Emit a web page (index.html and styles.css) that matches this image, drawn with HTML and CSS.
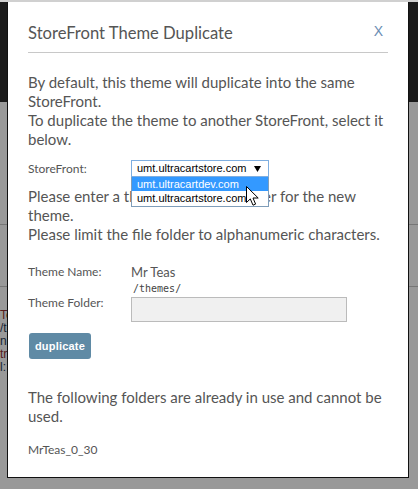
FILE: index.html
```html
<!DOCTYPE html>
<html lang="en">
<head>
<meta charset="utf-8">
<title>StoreFront Themes</title>
<link rel="stylesheet" href="styles.css">
</head>
<body>
  <div class="page">
    <header class="page-head"></header>
    <section class="page-toolbar"></section>
    <section class="page-filter"></section>
    <ul class="page-list">
      <li class="tone-red">Teas</li>
      <li>/themes</li>
      <li>n: 0</li>
      <li class="tone-red">tr</li>
      <li>l: 1</li>
    </ul>
  </div>

  <div class="backdrop"></div>

  <div class="modal" role="dialog" aria-labelledby="dup-title">
    <div class="modal-head">
      <h2 class="modal-title" id="dup-title">StoreFront Theme Duplicate</h2>
      <button class="modal-close" type="button">X</button>
    </div>
    <div class="modal-body">
      <p class="lead">By default, this theme will duplicate into the same StoreFront.<br>To duplicate the theme to another StoreFront, select it below.</p>

      <div class="sf-row">
        <span class="field-label">StoreFront:</span>
        <div class="select">
          <div class="select-box">
            <span>umt.ultracartstore.com</span>
            <svg class="caret" width="7" height="6" viewBox="0 0 7 6"><path d="M0 0H7L3.5 6Z" fill="#000"/></svg>
          </div>
          <ul class="select-list">
            <li class="is-active">umt.ultracartdev.com</li>
            <li>umt.ultracartstore.com</li>
          </ul>
          <svg class="pointer" width="13" height="20" viewBox="0 0 13 20">
            <path d="M0.5 0.5V16.5L4.3 12.9L7 19.2L9.6 18.1L7 12H12.2Z" fill="#fff" stroke="#000" stroke-width="1" stroke-linejoin="round"/>
          </svg>
        </div>
      </div>

      <p class="lead lead-gap">Please enter a theme name and folder for the new theme.<br>Please limit the file folder to alphanumeric characters.</p>

      <div class="form-grid">
        <span class="field-label">Theme Name:</span>
        <span class="field-value">Mr Teas</span>
        <span class="field-label">Theme Folder:</span>
        <div class="folder">
          <code class="folder-prefix">/themes/</code>
          <input class="folder-input" type="text">
        </div>
      </div>

      <button class="btn" type="button">duplicate</button>

      <p class="lead lead-used">The following folders are already in use and cannot be used.</p>
      <div class="used-folder">MrTeas_0_30</div>
    </div>
  </div>
</body>
</html>
```

FILE: styles.css
```css
* {
  box-sizing: border-box;
}

html,
body {
  margin: 0;
  height: 100%;
}

body {
  font-family: Lato, "Noto Sans", sans-serif;
  background: #fff;
  overflow: hidden;
}

/* ---- page behind the dialog ---- */
.page {
  border-top: 2px solid #d0d0d0;
}

.page-head {
  height: 100px;
  background: #2d2d2d;
}

.page-toolbar {
  height: 123px;
  border-bottom: 1px solid #c6c6c6;
}

.page-filter {
  height: 62px;
  border-bottom: 1px solid #c6c6c6;
}

.page-list {
  list-style: none;
  margin: 22px 0 0;
  padding: 0;
  font: 12px/13px "Liberation Sans", Arial, sans-serif;
  color: #2b3a55;
}

.page-list .tone-red {
  color: #8c2f2f;
}

.backdrop {
  position: fixed;
  top: 2px;
  left: 0;
  right: 0;
  bottom: 0;
  background: rgba(0, 0, 0, 0.4);
}

/* ---- dialog ---- */
.modal {
  position: fixed;
  top: 2px;
  left: 7px;
  width: 402px;
  background: #fff;
  border: 1px solid #111;
  border-top: 0;
  padding: 0 20px 20px;
  color: #555;
}

.modal-head {
  display: flex;
  justify-content: space-between;
  align-items: flex-start;
  padding: 21px 0 9px;
  border-bottom: 1px solid #c8c8c8;
}

.modal-title {
  margin: 0;
  font-size: 16.6px;
  line-height: 20px;
  font-weight: 400;
  color: #555;
}

.modal-close {
  margin: 0 5px 0 0;
  padding: 0;
  border: 0;
  background: none;
  font: 14px/16px "Liberation Sans", Arial, sans-serif;
  color: #6a8db3;
  cursor: pointer;
}

.modal-body {
  padding-top: 20px;
}

.lead {
  margin: 0;
  font-size: 15px;
  line-height: 19px;
}

.lead-gap {
  margin-top: 10px;
}

.lead-used {
  margin-top: 29px;
}

.field-label {
  font-size: 12px;
  line-height: 16px;
}

/* storefront picker */
.sf-row {
  display: flex;
  align-items: center;
  margin-top: 11px;
}

.sf-row .field-label {
  width: 103px;
}

.select {
  position: relative;
}

.select-box {
  width: 138px;
  height: 17px;
  display: flex;
  align-items: center;
  justify-content: space-between;
  padding: 0 7px 0 5px;
  border: 1px solid #7eaee0;
  font: 11px/15px "Liberation Sans", Arial, sans-serif;
  color: #000;
}

.select-list {
  position: absolute;
  top: 100%;
  left: 0;
  width: 138px;
  margin: 0;
  padding: 0 0 1px;
  list-style: none;
  background: #fff;
  border: 1px solid #7f9db9;
  border-top: 0;
  font: 11px/14px "Liberation Sans", Arial, sans-serif;
  color: #000;
}

.select-list li {
  padding-left: 5px;
}

.select-list .is-active {
  background: #3399ff;
  color: #fff;
}

.pointer {
  position: absolute;
  left: 115px;
  top: 26px;
}

/* theme fields */
.form-grid {
  display: grid;
  grid-template-columns: 103px 1fr;
  row-gap: 3px;
  align-items: center;
  margin-top: 20px;
}

.field-value {
  font-size: 13px;
  line-height: 16px;
}

.folder {
  display: flex;
  flex-direction: column;
  align-items: flex-start;
}

.folder-prefix {
  padding-left: 2px;
  margin-bottom: 2px;
  font: 10px/12px "DejaVu Sans Mono", "Liberation Mono", monospace;
  color: #444;
}

.folder-input {
  width: 216px;
  height: 25px;
  margin: 0;
  border: 1px solid #bbb;
  background: #f0f0f0;
}

.btn {
  display: block;
  width: 62px;
  height: 26px;
  margin: 11px 0 0 1px;
  padding: 0;
  border: 0;
  border-radius: 3px;
  background: #5f8aa5;
  color: #fff;
  font: bold 11px/26px "Liberation Sans", Arial, sans-serif;
  letter-spacing: 0.2px;
  cursor: pointer;
}

.used-folder {
  margin-top: 17px;
  font-size: 12px;
  line-height: 14px;
}
```
